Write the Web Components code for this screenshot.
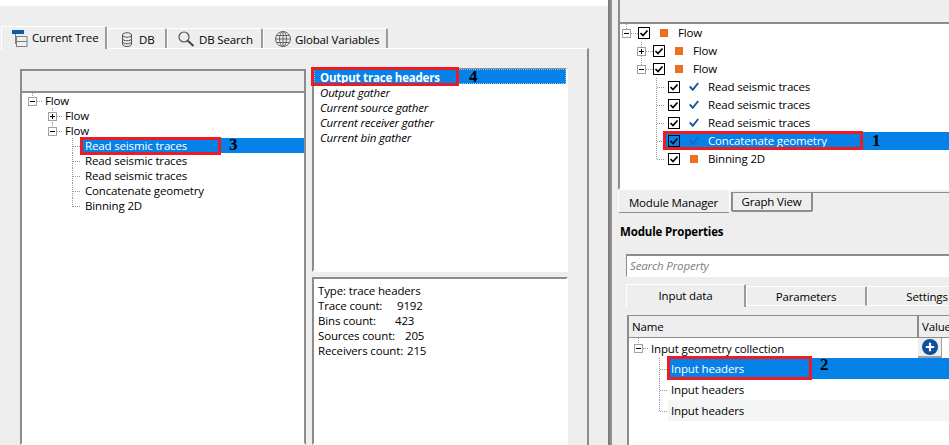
<!DOCTYPE html>
<html lang="en">
<head>
<meta charset="UTF-8">
<title>Flow editor</title>
<style>
    html, body { margin: 0; height: 100%; }
    body {
        width: 949px; height: 445px; overflow: hidden; display: flex; background: #eee; color: #000;
        font: 11.5px/15px "Open Sans", "Noto Sans", sans-serif; letter-spacing: -0.15px;
    }
</style>
</head>
<body>

<left-pane>
    <tab-strip slot="tabs">
        <tab-btn active style="--w:106px;--pad:10px;--gap:4px">
            <svg slot="icon" width="16" height="18" viewBox="0 0 16 18"><rect x="0" y="1" width="12" height="4" fill="#0b5aa8"/><path d="M3.5 5v10M3.5 9.5h1.500M3.500 14.500h1.500" stroke="#808080" fill="none"/><rect x="4.500" y="7.500" width="10.500" height="5" fill="none" stroke="#808080"/><rect x="4.500" y="12.500" width="10.500" height="5" fill="none" stroke="#808080"/></svg>
            Current Tree
        </tab-btn>
        <tab-btn style="--w:60px;--pad:14px;--gap:7px">
            <svg slot="icon" width="10" height="15" viewBox="0 0 10 15"><path d="M.5 3v9c0 3.300 9 3.300 9 0V3M.5 3c0-3 9-3 9 0s-9 3-9 0M.5 6.500c0 3 9 3 9 0M.5 9.500c0 3 9 3 9 0" fill="none" stroke="#555"/></svg>
            DB
        </tab-btn>
        <tab-btn style="--w:96px;--pad:10px;--gap:4px">
            <svg slot="icon" width="17" height="16" viewBox="0 0 17 16"><circle cx="6" cy="6" r="5" fill="none" stroke="#555" stroke-width="1.200"/><path d="M9.800 9.800l5.700 5.200" stroke="#444" stroke-width="2"/></svg>
            DB Search
        </tab-btn>
        <tab-btn style="--w:125px;--pad:11px;--gap:4px">
            <svg slot="icon" width="16" height="16" viewBox="0 0 16 16"><g fill="none" stroke="#666"><circle cx="8" cy="8" r="7.500"/><ellipse cx="8" cy="8" rx="3.500" ry="7.500"/><path d="M8 .5v15M.5 8h15M1.700 4.500h12.600M1.700 11.500h12.600"/></g></svg>
            Global Variables
        </tab-btn>
    </tab-strip>

    <sunken-box slot="tree" header style="--hh:20px">
        <tree-row h="15" gw="20" cx="10.500" exp="minus" last pad="3">Flow</tree-row>
        <tree-row h="15" gw="40" cx="30.500" exp="plus" pad="3">Flow</tree-row>
        <tree-row h="15" gw="40" cx="30.500" exp="minus" last pad="3">Flow</tree-row>
        <tree-row h="15" gw="58" cx="50.500" sel pad="5">Read seismic traces<note-mark n="3" style="--l:0px;--t:-1px;--w:141px;--h:18px;--nx:149px;--ny:-2px"></note-mark></tree-row>
        <tree-row h="15" gw="58" cx="50.500" pad="5">Read seismic traces</tree-row>
        <tree-row h="15" gw="58" cx="50.500" pad="5">Read seismic traces</tree-row>
        <tree-row h="15" gw="58" cx="50.500" pad="5">Concatenate geometry</tree-row>
        <tree-row h="15" gw="58" cx="50.500" last pad="5">Binning 2D</tree-row>
    </sunken-box>

    <sunken-box slot="list" style="border-top-width:1px">
        <out-row first>Output trace headers<note-mark n="4" style="--l:-3px;--t:-2px;--w:148px;--h:19px;--nx:155px;--ny:-1px"></note-mark></out-row>
        <out-row>Output gather</out-row>
        <out-row>Current source gather</out-row>
        <out-row>Current receiver gather</out-row>
        <out-row>Current bin gather</out-row>
    </sunken-box>

    <sunken-box slot="info">
        <info-text>
            <info-line>Type: trace headers</info-line>
            <info-line num="9192" x="79">Trace count:</info-line>
            <info-line num="423" x="77">Bins count:</info-line>
            <info-line num="205" x="87">Sources count:</info-line>
            <info-line num="215" x="89">Receivers count:</info-line>
        </info-text>
    </sunken-box>
</left-pane>

<right-pane>
    <sunken-box slot="tree" header edge style="--hh:22px">
        <tree-row h="18" gw="18" cx="6.500" exp="minus" last><check-box slot="icons"></check-box><state-mark slot="icons" kind="square"></state-mark>Flow</tree-row>
        <tree-row h="18" gw="33" cx="21.500" exp="plus"><check-box slot="icons"></check-box><state-mark slot="icons" kind="square"></state-mark>Flow</tree-row>
        <tree-row h="18" gw="33" cx="21.500" exp="minus" last><check-box slot="icons"></check-box><state-mark slot="icons" kind="square"></state-mark>Flow</tree-row>
        <tree-row h="18" gw="44" cx="36.500" pad="4"><check-box slot="icons"></check-box><state-mark slot="icons" kind="check"></state-mark>Read seismic traces</tree-row>
        <tree-row h="18" gw="44" cx="36.500" pad="4"><check-box slot="icons"></check-box><state-mark slot="icons" kind="check"></state-mark>Read seismic traces</tree-row>
        <tree-row h="18" gw="44" cx="36.500" pad="4"><check-box slot="icons"></check-box><state-mark slot="icons" kind="check"></state-mark>Read seismic traces</tree-row>
        <tree-row h="18" gw="44" cx="36.500" pad="4" sel><check-box slot="icons" sel></check-box><state-mark slot="icons" kind="check" sel></state-mark>Concatenate geometry<note-mark n="1" style="--l:-1px;--t:-1px;--w:200px;--h:19px;--nx:208px;--ny:0px"></note-mark></tree-row>
        <tree-row h="18" gw="44" cx="36.500" pad="4" last><check-box slot="icons"></check-box><state-mark slot="icons" kind="square"></state-mark>Binning 2D</tree-row>
    </sunken-box>

    <south-tabs slot="south">
        <south-tab active style="--w:112px">Module Manager</south-tab>
        <south-tab style="--w:82px">Graph View</south-tab>
    </south-tabs>

    <module-props slot="props">
        <span slot="title">Module Properties</span>
        <span slot="search">Search Property</span>
        <tab-strip slot="tabs" flat>
            <tab-btn active center style="--w:120px">Input data</tab-btn>
            <tab-btn center style="--w:121px">Parameters</tab-btn>
            <tab-btn center style="--w:121px">Settings</tab-btn>
        </tab-strip>
        <prop-table slot="table">
            <tree-row h="20" gw="19" cx="9.500" exp="minus" last pad="3" style="--tp:2px">Input geometry collection<add-button slot="end"></add-button></tree-row>
            <tree-row h="21" gw="39" cx="30.500" pad="3" sel>Input headers<note-mark n="2" style="--l:-1px;--t:-2px;--w:145px;--h:24px;--nx:152px;--ny:-2px"></note-mark></tree-row>
            <tree-row h="21" gw="39" cx="30.500" pad="3">Input headers</tree-row>
            <tree-row h="21" gw="39" cx="30.500" pad="3" last alt>Input headers</tree-row>
        </prop-table>
    </module-props>
</right-pane>

<script>
    const DARK = '#8c8c8c';

    // small helper, every element below is just a shadow root with a style + markup
    function shadow(el, html) {
        el.attachShadow({ mode: 'open' }).innerHTML = html;
    }

    class LeftPane extends HTMLElement {
        constructor() {
            super();
            shadow(this, `<style>
                :host { display: flex; flex-direction: column; width: 608px; height: 445px; flex: none; }
                .top { height: 6px; background: #fff; flex: none; margin-bottom: 20px; }
                .tabs { height: 22px; flex: none; }
                .body {
                    flex: 1; width: 589px; box-sizing: border-box; min-height: 0;
                    border-top: 1px solid #fff; border-right: 2px solid ${DARK};
                    padding: 20px 0 0 20px;
                    display: grid; grid-template-columns: 286px 256px; column-gap: 6px;
                    grid-template-rows: 203px 1fr; row-gap: 5px;
                }
                .tree { grid-row: 1 / 3; }
                .list { margin-top: -1px; }
            </style>
            <div class="top"></div>
            <div class="tabs"><slot name="tabs"></slot></div>
            <div class="body">
                <div class="tree"><slot name="tree"></slot></div>
                <div class="list"><slot name="list"></slot></div>
                <div class="info"><slot name="info"></slot></div>
            </div>`);
        }
    }

    class RightPane extends HTMLElement {
        constructor() {
            super();
            shadow(this, `<style>
                :host { display: flex; width: 341px; height: 445px; flex: none; overflow: hidden; }
                .split { width: 4px; flex: none; background: linear-gradient(90deg, #777, #999); }
                .col { width: 331px; margin-left: 6px; flex: none; display: flex; flex-direction: column; overflow: hidden; }
                .tree { height: 190px; flex: none; }
            </style>
            <div class="split"></div>
            <div class="col">
                <div class="tree"><slot name="tree"></slot></div>
                <slot name="south"></slot>
                <slot name="props"></slot>
            </div>`);
        }
    }

    class SunkenBox extends HTMLElement {
        constructor() {
            super();
            const hasHeader = this.hasAttribute('header');
            shadow(this, `<style>
                :host {
                    display: flex; flex-direction: column; box-sizing: border-box; height: 100%;
                    background: #fff; border: 2px solid #fff; border-top-color: ${DARK}; border-left-color: ${DARK};
                }
                :host([header]) { border-right-color: ${DARK}; }
                :host([edge]) { border-right: 0; border-top: 0; border-bottom-color: #fff; }
                .head { height: var(--hh); flex: none; background: #eee; border-bottom: 2px solid ${DARK}; }
                .rows { flex: 1; min-height: 0; }
            </style>
            ${hasHeader ? '<div class="head"></div>' : ''}
            <div class="rows"><slot></slot></div>`);
        }
    }

    class TabStrip extends HTMLElement {
        constructor() {
            super();
            shadow(this, `<style>
                :host { display: flex; align-items: flex-end; height: 100%; padding-left: 1px; }
                :host([flat]) { height: 21px; flex: none; margin: 8px 0 0 8px; width: 400px; padding-left: 0; }
            </style><slot></slot>`);
        }
    }

    class TabBtn extends HTMLElement {
        constructor() {
            super();
            shadow(this, `<style>
                :host {
                    display: flex; align-items: center; box-sizing: border-box; flex: none;
                    width: var(--w); height: 20px; padding-left: var(--pad, 0); padding-top: 1px; gap: var(--gap, 0);
                    border-top: 1px solid #fff; border-left: 1px solid #fff; border-right: 2px solid #9a9a9a;
                    border-radius: 2px 2px 0 0; white-space: nowrap;
                }
                :host([active]) {
                    height: 23px; margin-bottom: -1px; padding-top: 0; padding-bottom: 1px;
                    background: #eee; position: relative; z-index: 1;
                }
                :host([center]) { justify-content: center; }
                :host([center]:not([active])) { border-bottom: 1px solid #fff; }
                ::slotted(svg) { flex: none; }
            </style><slot name="icon"></slot><slot></slot>`);
        }
    }

    class SouthTabs extends HTMLElement {
        constructor() {
            super();
            shadow(this, `<style>
                :host { display: flex; align-items: flex-start; height: 23px; flex: none; }
                .rule { flex: 1; height: 3px; border-top: 1px solid ${DARK}; margin-top: 2px; }
            </style><slot></slot><div class="rule"></div>`);
        }
    }

    class SouthTab extends HTMLElement {
        constructor() {
            super();
            shadow(this, `<style>
                :host {
                    display: flex; align-items: center; justify-content: center; flex: none; box-sizing: border-box;
                    width: var(--w); height: 20px; margin-top: 2px; white-space: nowrap;
                    border: 2px solid ${DARK}; border-top: 1px solid ${DARK}; border-radius: 0 0 2px 2px; padding-right: 1px;
                }
                :host([active]) {
                    height: 23px; margin-top: 0; border: 1px solid #fff; border-top: 0;
                    border-bottom: 1px solid ${DARK}; padding-top: 3px; margin-right: 1px;
                }
            </style><slot></slot>`);
        }
    }

    class ModuleProps extends HTMLElement {
        constructor() {
            super();
            shadow(this, `<style>
                :host { display: flex; flex-direction: column; flex: 1; min-height: 0; }
                .title { font-weight: 700; margin: 11px 0 0 2px; height: 16px; line-height: 16px; flex: none; }
                .search {
                    margin: 14px 0 0 8px; height: 23px; flex: none; box-sizing: border-box; background: #fff;
                    border-top: 2px solid ${DARK}; border-left: 1px solid ${DARK}; border-bottom: 1px solid #fff;
                    padding-left: 3px; line-height: 20px; font-style: italic; color: #808080;
                }
                .table { margin: 9px 0 0 9px; flex: 1; min-height: 0; }
            </style>
            <div class="title"><slot name="title"></slot></div>
            <div class="search"><slot name="search"></slot></div>
            <slot name="tabs"></slot>
            <div class="table"><slot name="table"></slot></div>`);
        }
    }

    class PropTable extends HTMLElement {
        constructor() {
            super();
            shadow(this, `<style>
                :host {
                    display: block; height: 100%; box-sizing: border-box; background: #fff;
                    border-top: 1px solid ${DARK}; border-left: 2px solid ${DARK};
                }
                .head { display: flex; height: 21px; background: #eee; border-bottom: 1px solid ${DARK}; line-height: 21px; }
                .name { width: 290px; padding-left: 3px; box-sizing: border-box; border-right: 2px solid ${DARK}; flex: none; }
                .value { padding-left: 3px; }
            </style>
            <div class="head"><div class="name">Name</div><div class="value">Value</div></div>
            <slot></slot>`);
        }
    }

    class TreeRow extends HTMLElement {
        constructor() {
            super();
            const h = +this.getAttribute('h');
            const gw = +this.getAttribute('gw');
            const cx = +this.getAttribute('cx');
            const exp = this.getAttribute('exp');
            const last = this.hasAttribute('last');
            const cy = Math.ceil(h / 2) + .5;
            let g = `<path d="M${cx} 0V${last ? cy : h}M${cx} ${cy}H${gw}" stroke="#9a9a9a" stroke-dasharray="1 1" fill="none"/>`;
            if (exp) {
                g += `<rect x="${cx - 4}" y="${cy - 4}" width="8" height="8" fill="#fff" stroke="#a0a0a0"/>`;
                g += `<path d="M${cx - 2.5} ${cy}h5${exp == 'plus' ? `M${cx} ${cy - 2.5}v5` : ''}" stroke="#000" fill="none"/>`;
            }
            shadow(this, `<style>
                :host { display: flex; height: ${h}px; line-height: ${h}px; white-space: nowrap; }
                svg { flex: none; display: block; }
                .c { flex: 1; min-width: 0; display: flex; align-items: center; position: relative; padding-left: ${this.getAttribute('pad') || 0}px; }
                :host([sel]) .c { background: #0681e8; color: #fff; }
                :host([alt]) .c { background: #f5f5f5; }
                .t { flex: 1; padding-top: var(--tp, 0); }
            </style>
            <svg width="${gw}" height="${h}" shape-rendering="crispEdges">${g}</svg>
            <div class="c"><slot name="icons"></slot><span class="t"><slot></slot></span><slot name="end"></slot></div>`);
        }
    }

    class CheckBox extends HTMLElement {
        constructor() {
            super();
            shadow(this, `<style>
                :host { display: block; width: 12px; height: 12px; margin-right: 9px; flex: none; }
                svg { display: block; }
            </style>
            <svg width="12" height="12" viewBox="0 0 12 12">
                <rect x=".5" y=".5" width="11" height="11" fill="${this.hasAttribute('sel') ? 'none' : '#fff'}" stroke="#000"/>
                <path d="M2.500 6l2.500 2.500 4.500-5" fill="none" stroke="#000" stroke-width="1.700"/>
            </svg>`);
        }
    }

    class StateMark extends HTMLElement {
        constructor() {
            super();
            const check = this.getAttribute('kind') == 'check';
            const col = this.hasAttribute('sel') ? '#1a68bd' : '#15599f';
            shadow(this, `<style>
                :host { display: block; width: 10px; height: 10px; margin-right: 9px; flex: none; }
                svg { display: block; }
            </style>
            <svg width="10" height="10" viewBox="0 0 10 10">${check
                    ? `<path d="M.8 4.500l3 3.300 5.400-6.800" fill="none" stroke="${col}" stroke-width="2"/>`
                    : '<rect x="1" y="1" width="8" height="8" fill="#ee6f22"/>'}</svg>`);
        }
    }

    class NoteMark extends HTMLElement {
        constructor() {
            super();
            shadow(this, `<style>
                :host { display: contents; }
                .box {
                    position: absolute; left: var(--l); top: var(--t); width: var(--w); height: var(--h);
                    box-sizing: border-box; border: 3px solid #ed1c24;
                }
                .n {
                    position: absolute; left: var(--nx); top: var(--ny); color: #000;
                    font: 700 17px/17px "Liberation Serif", serif;
                }
            </style><div class="box"></div><div class="n">${this.getAttribute('n')}</div>`);
        }
    }

    class OutRow extends HTMLElement {
        constructor() {
            super();
            shadow(this, `<style>
                :host { display: block; height: 15px; line-height: 17px; font-style: italic; padding-left: 6px; position: relative; white-space: nowrap; }
                :host([first]) {
                    font-style: normal; font-weight: 700; color: #fff; background: #0681e8; letter-spacing: -0.2px;
                    outline: 1px dotted #8fc3f0; outline-offset: -1px;
                }
            </style><slot></slot>`);
        }
    }

    class InfoText extends HTMLElement {
        constructor() {
            super();
            shadow(this, `<style>:host { display: block; padding: 4px 0 0 4px; }</style><slot></slot>`);
        }
    }

    class InfoLine extends HTMLElement {
        constructor() {
            super();
            const num = this.getAttribute('num');
            shadow(this, `<style>
                :host { display: flex; height: 15px; white-space: nowrap; }
                .l { width: ${this.getAttribute('x') || 200}px; flex: none; }
            </style><span class="l"><slot></slot></span><span>${num || ''}</span>`);
        }
    }

    class AddButton extends HTMLElement {
        constructor() {
            super();
            shadow(this, `<style>
                :host {
                    display: flex; align-items: center; justify-content: center; flex: none;
                    width: 24px; height: 20px; margin-right: 7px; box-sizing: border-box; background: #eee;
                    border-right: 1px solid #a0a0a0; border-bottom: 2px solid #a0a0a0;
                }
            </style>
            <svg width="16" height="16" viewBox="0 0 16 16"><circle cx="8" cy="8" r="8" fill="#0b4f9e"/><path d="M8 3.800v8.400M3.800 8h8.400" stroke="#fff" stroke-width="2.200"/></svg>`);
        }
    }

    customElements.define('left-pane', LeftPane);
    customElements.define('right-pane', RightPane);
    customElements.define('sunken-box', SunkenBox);
    customElements.define('tab-strip', TabStrip);
    customElements.define('tab-btn', TabBtn);
    customElements.define('south-tabs', SouthTabs);
    customElements.define('south-tab', SouthTab);
    customElements.define('module-props', ModuleProps);
    customElements.define('prop-table', PropTable);
    customElements.define('tree-row', TreeRow);
    customElements.define('check-box', CheckBox);
    customElements.define('state-mark', StateMark);
    customElements.define('note-mark', NoteMark);
    customElements.define('out-row', OutRow);
    customElements.define('info-text', InfoText);
    customElements.define('info-line', InfoLine);
    customElements.define('add-button', AddButton);
</script>
</body>
</html>
